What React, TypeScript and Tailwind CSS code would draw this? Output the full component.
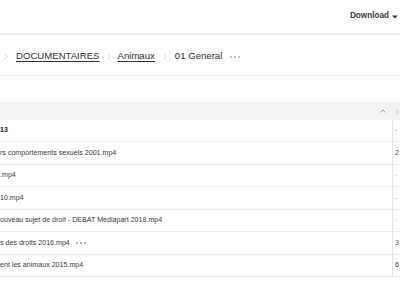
import React from "react";

const rows = [
  { name: "13", bold: true, value: "-", valueClass: "text-[#888]" },
  { name: "rs comportements sexuels 2001.mp4", value: "2", valueClass: "text-[#444]" },
  { name: ".mp4", value: "-", valueClass: "text-[#d8c98a]" },
  { name: "10.mp4", value: "-", valueClass: "text-[#999]" },
  { name: "ouveau sujet de droit - DEBAT Mediapart 2018.mp4", value: "-", valueClass: "text-[#d8c98a]" },
  { name: "s des droits 2016.mp4", value: "3", valueClass: "text-[#555]", more: true },
  { name: "ent les animaux 2015.mp4", value: "6", valueClass: "text-[#333]" },
];

const Chevron = () => (
  <svg width="4" height="7" viewBox="0 0 4 7" className="shrink-0">
    <path d="M0.6 0.6 L3.3 3.5 L0.6 6.4" fill="none" stroke="#d4d4d4" strokeWidth="1" />
  </svg>
);

const Dots = ({ color = "bg-[#aaa]" }: { color?: string }) => (
  <span className="flex items-center gap-[2px]">
    <span className={`w-[2px] h-[2px] rounded-full ${color}`} />
    <span className={`w-[2px] h-[2px] rounded-full ${color}`} />
    <span className={`w-[2px] h-[2px] rounded-full ${color}`} />
  </span>
);

export default function App() {
  return (
    <div className="w-[400px] h-[284px] overflow-hidden bg-white font-['Liberation_Sans',Arial,sans-serif]">
      {/* Top bar */}
      <div className="h-[33px] flex items-center justify-end pr-[2px]">
        <span className="text-[8.2px] font-bold text-[#3a3a3a]">Download</span>
        <svg width="6" height="4" viewBox="0 0 6 4" className="ml-[3px]">
          <path d="M0 0.5 H6 L3 3.5 Z" fill="#333" />
        </svg>
      </div>
      <div className="h-[1px] bg-[#e6e6e6]" />
      <div className="h-[1px] bg-[#f3f3f3]" />

      {/* Breadcrumb */}
      <div className="h-[41px] flex items-center border-b border-[#f2f2f2] pt-[3px] text-[9.6px] text-[#333]">
        <span className="ml-[4px]">
          <Chevron />
        </span>
        <a className="ml-[8px] underline underline-offset-[2px]">DOCUMENTAIRES</a>
        <span className="mx-[7px]">
          <Chevron />
        </span>
        <a className="underline underline-offset-[2px]">Animaux</a>
        <span className="ml-[8px] mr-[8px]">
          <Chevron />
        </span>
        <span>01 General</span>
        <span className="ml-[8px]">
          <Dots color="bg-[#b5b5b5]" />
        </span>
      </div>

      <div className="h-[26px]" />

      {/* Table header */}
      <div className="h-[18px] flex bg-[#f3f3f3]">
        <div className="flex-1 flex items-center justify-end pr-[6px]">
          <svg width="6" height="4" viewBox="0 0 6 4">
            <path d="M0.5 3.5 L3 1 L5.5 3.5" fill="none" stroke="#999" strokeWidth="1" />
          </svg>
        </div>
        <div className="w-[8px] flex items-center pl-[4px]">
          <span className="w-[3px] h-[5px] bg-[#e0e0e0]" />
        </div>
      </div>

      {/* Rows */}
      {rows.map((row, i) => (
        <div key={i} className="h-[22.43px] flex border-b border-[#ececec]">
          <div className="flex-1 flex items-center gap-[6px] text-[7.1px] text-[#3a3a3a] whitespace-nowrap overflow-hidden">
            <span className={row.bold ? "font-bold text-[#222]" : ""}>{row.name}</span>
            {row.more && <Dots color="bg-[#999]" />}
          </div>
          <div className={`w-[8px] border-l border-[#e6e6e6] flex items-center pl-[2px] text-[7px] overflow-hidden ${row.valueClass}`}>
            {row.value}
          </div>
        </div>
      ))}
    </div>
  );
}
